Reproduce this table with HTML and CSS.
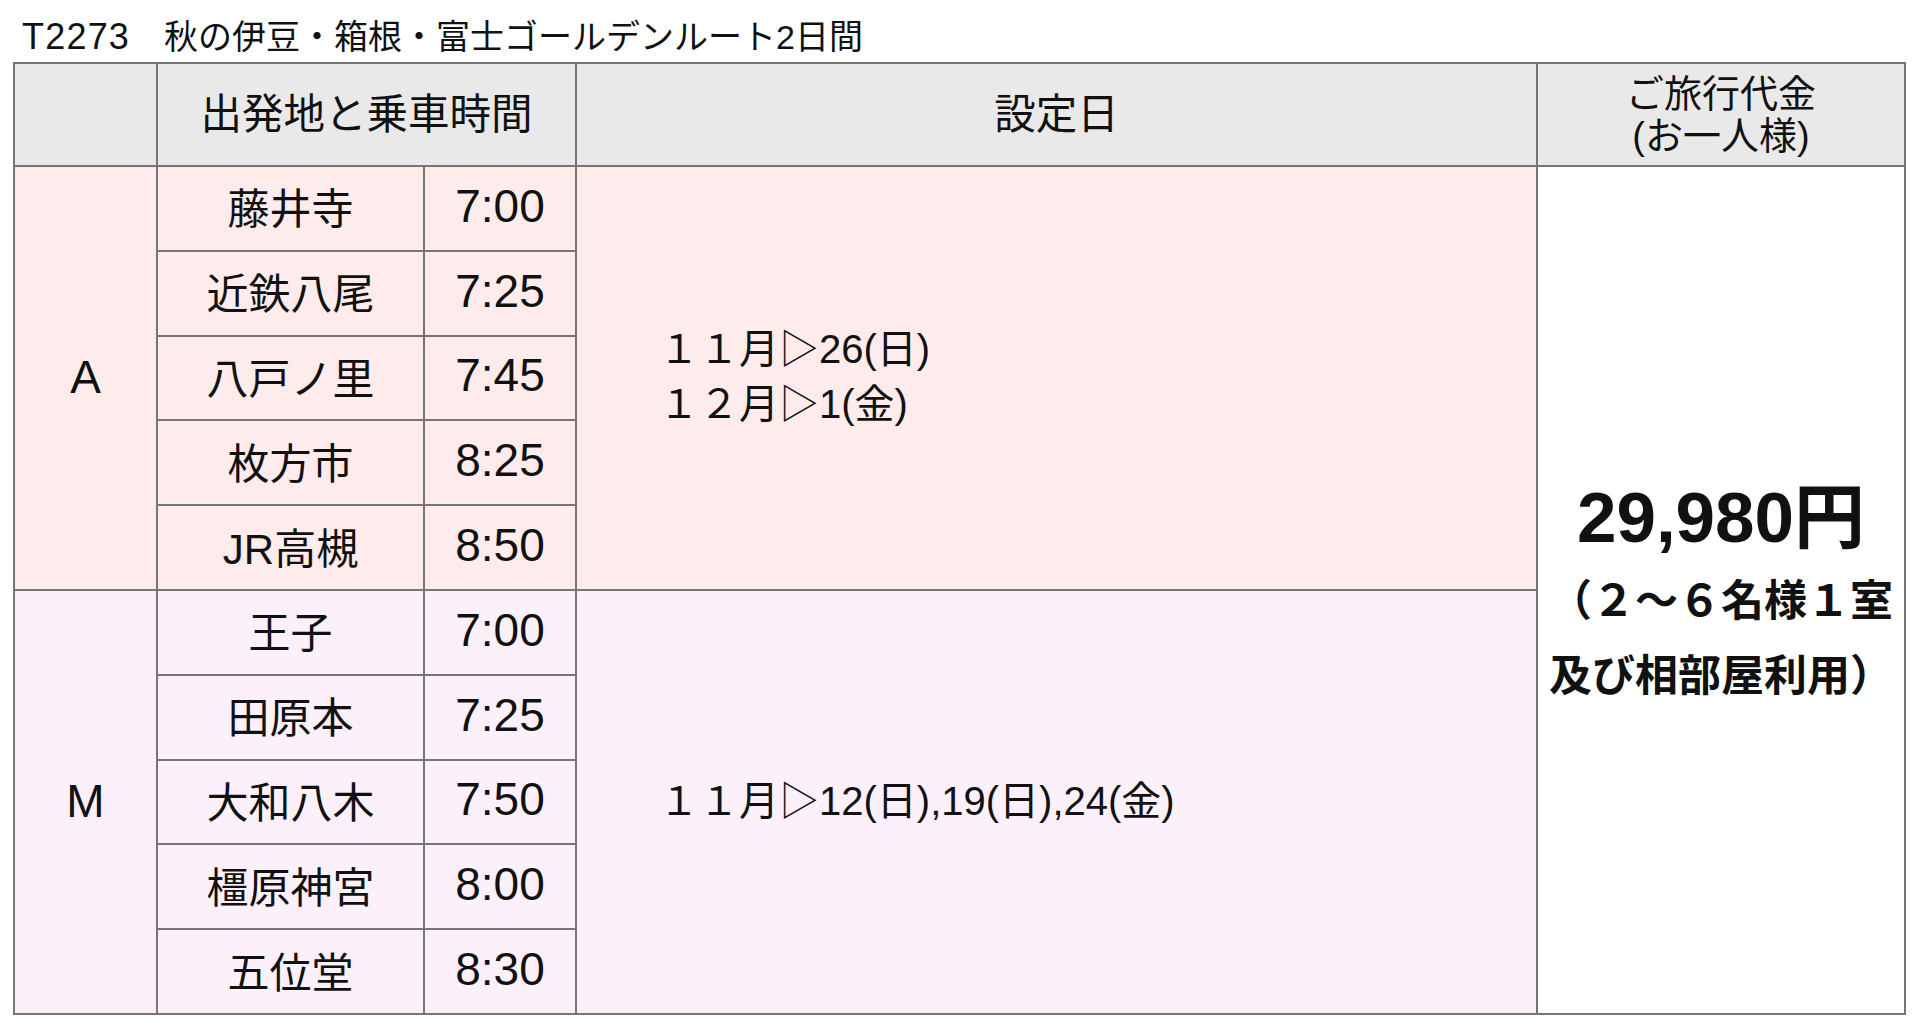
FILE: index.html
```html
<!DOCTYPE html>
<html lang="ja">
<head>
<meta charset="utf-8">
<title>T2273 秋の伊豆・箱根・富士ゴールデンルート2日間</title>
<link rel="stylesheet" href="styles.css">
</head>
<body>
<main class="page">
  <h1 class="tour-title"><span class="tour-code">T2273</span>　秋の伊豆・箱根・富士ゴールデンルート2日間</h1>
  <table class="schedule">
    <colgroup>
      <col class="c-group">
      <col class="c-station">
      <col class="c-time">
      <col class="c-dates">
      <col class="c-price">
    </colgroup>
    <thead>
      <tr>
        <th></th>
        <th colspan="2">出発地と乗車時間</th>
        <th>設定日</th>
        <th class="price-head">ご旅行代金<br>(お一人様)</th>
      </tr>
    </thead>
    <tbody>
      <tr class="row-a">
        <td class="group" rowspan="5">A</td>
        <td class="station">藤井寺</td>
        <td class="time">7:00</td>
        <td class="dates" rowspan="5">１１月▷26(日)<br>１２月▷1(金)</td>
        <td class="price" rowspan="10">
          <div class="price-amount">29,980円</div>
          <div class="price-note">（２～６名様１室及び相部屋利用）</div>
        </td>
      </tr>
      <tr class="row-a"><td class="station">近鉄八尾</td><td class="time">7:25</td></tr>
      <tr class="row-a"><td class="station">八戸ノ里</td><td class="time">7:45</td></tr>
      <tr class="row-a"><td class="station">枚方市</td><td class="time">8:25</td></tr>
      <tr class="row-a"><td class="station">JR高槻</td><td class="time">8:50</td></tr>
      <tr class="row-m">
        <td class="group" rowspan="5">M</td>
        <td class="station">王子</td>
        <td class="time">7:00</td>
        <td class="dates" rowspan="5">１１月▷12(日),19(日),24(金)</td>
      </tr>
      <tr class="row-m"><td class="station">田原本</td><td class="time">7:25</td></tr>
      <tr class="row-m"><td class="station">大和八木</td><td class="time">7:50</td></tr>
      <tr class="row-m"><td class="station">橿原神宮</td><td class="time">8:00</td></tr>
      <tr class="row-m"><td class="station">五位堂</td><td class="time">8:30</td></tr>
    </tbody>
  </table>
</main>
</body>
</html>
```
FILE: styles.css
```css
* {
  box-sizing: border-box;
}

html,
body {
  margin: 0;
  background: #ffffff;
}

body {
  font-family: "Liberation Sans", "Noto Sans CJK JP", sans-serif;
  color: #111111;
}

.page {
  padding: 17px 15px 0 13px;
}

.tour-title {
  margin: 0 0 5px;
  padding-left: 9px;
  font-size: 34px;
  font-weight: normal;
  line-height: 40px;
}

.tour-code {
  font-size: 36px;
  letter-spacing: 1.2px;
}

.schedule {
  border-collapse: collapse;
  table-layout: fixed;
  width: 1891px;
}

.c-group { width: 143px; }
.c-station { width: 267px; }
.c-time { width: 152px; }
.c-dates { width: 961px; }
.c-price { width: 368px; }

.schedule th,
.schedule td {
  border: 2px solid #767676;
  padding: 0;
  text-align: center;
  vertical-align: middle;
}

.schedule thead th {
  background: #e9e9e9;
  font-weight: normal;
  font-size: 41.5px;
  line-height: 50px;
  height: 103px;
}

.schedule thead th.price-head {
  font-size: 38px;
  line-height: 42px;
}

.row-a td {
  background: #fdeceb;
  height: 84.8px;
}

.row-m td {
  background: #fcf0fb;
  height: 84.8px;
}

.schedule td.group {
  font-size: 46px;
  padding-bottom: 1px;
}

.schedule td.station {
  font-size: 42px;
  padding-bottom: 5px;
}

.schedule td.time {
  font-size: 46px;
  padding-bottom: 5px;
}

.schedule td.dates {
  text-align: left;
  padding-left: 82px;
  padding-bottom: 1px;
  font-size: 40px;
  line-height: 55px;
}

.schedule td.price {
  background: #ffffff;
  font-weight: bold;
  padding-top: 9px;
}

.price-amount {
  font-size: 71px;
  line-height: 87px;
  margin-bottom: 3px;
}

.price-note {
  font-size: 43px;
  line-height: 75px;
}
```
